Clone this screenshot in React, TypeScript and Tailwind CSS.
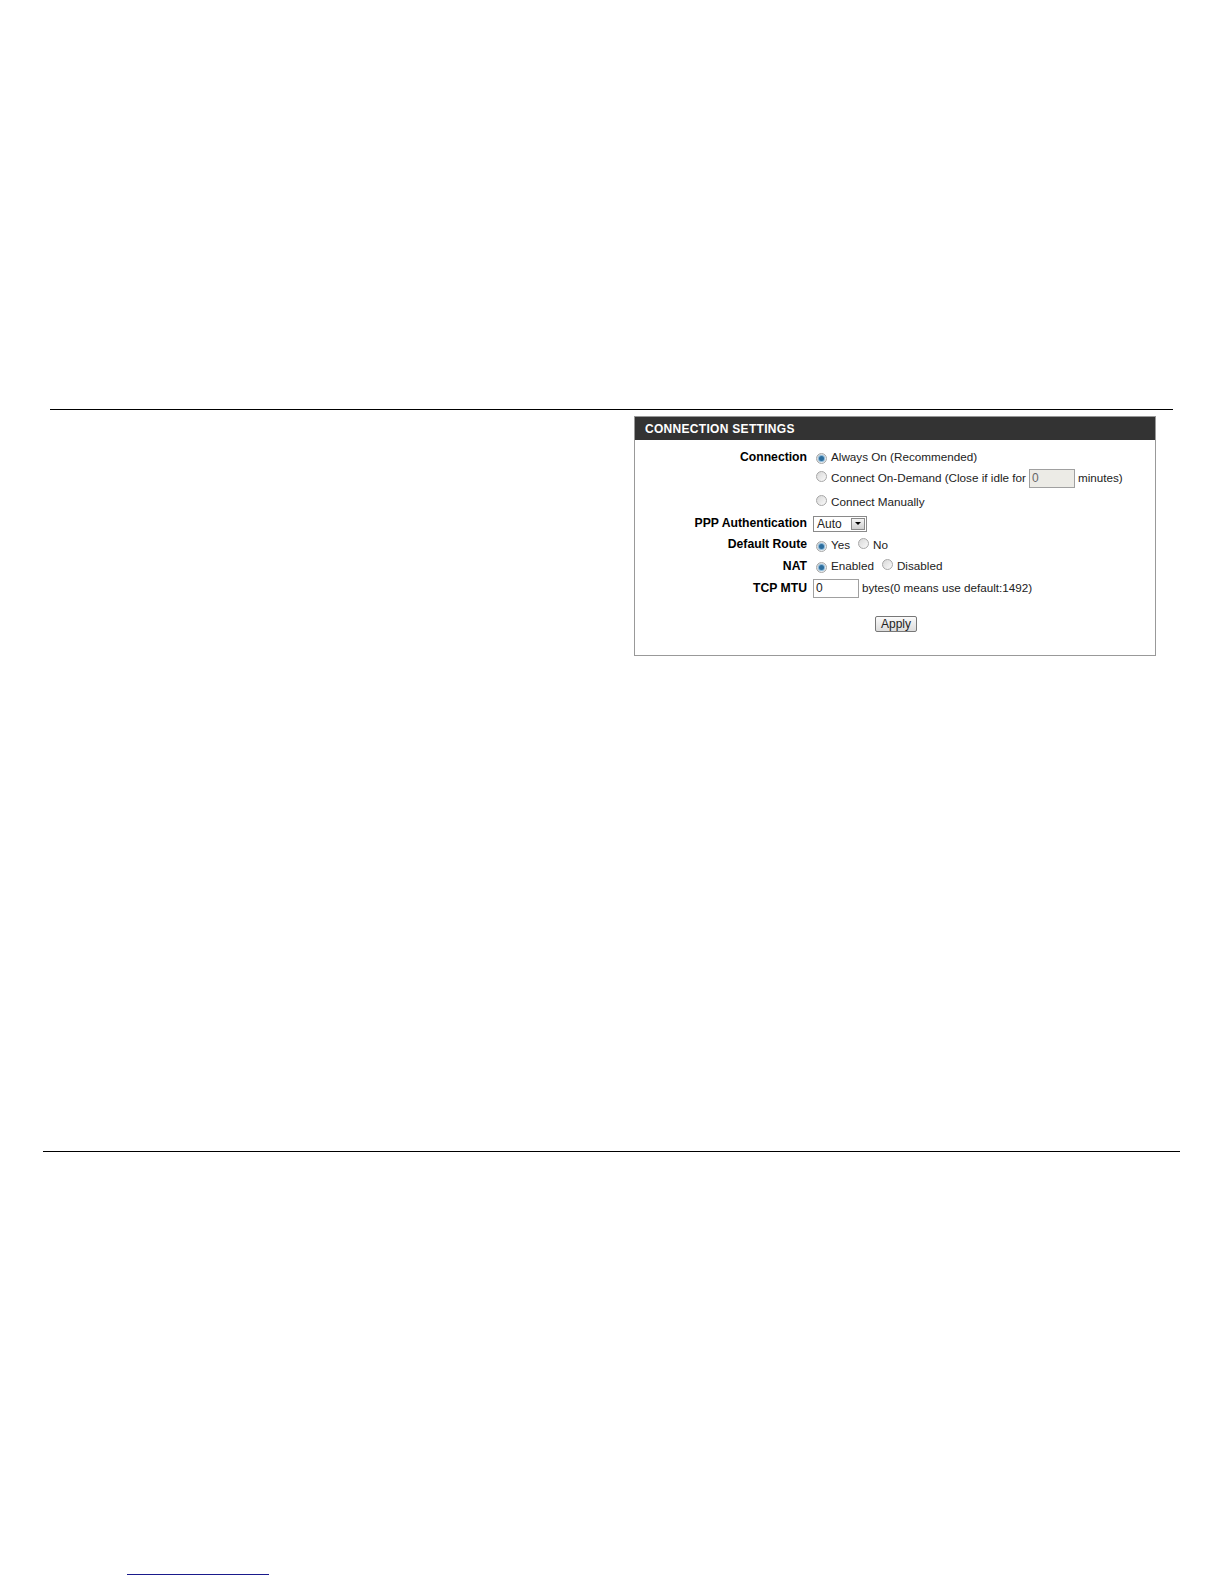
import React from "react";

const font = { fontFamily: '"Liberation Sans", Arial, sans-serif' };

function Radio({ checked }: { checked?: boolean }) {
    return (
        <span className="relative inline-flex h-[11px] w-[11px] shrink-0 items-center justify-center rounded-full border border-[#a7a7a7] bg-gradient-to-br from-[#d8d8d8] to-[#fafafa]">
            {checked && <span className="h-[5px] w-[5px] rounded-full bg-[#2d6e9e] shadow-[0_0_1px_1px_#7fb2d6]" />}
        </span>
    );
}

function Row({ label, h, children }: { label?: string; h: string; children: React.ReactNode }) {
    return (
        <div className={`flex items-center ${h}`}>
            <div className="w-[172px] shrink-0 text-right text-[12.2px] font-bold text-black">{label}</div>
            <div className="flex items-center text-[11.7px] text-[#222]">{children}</div>
        </div>
    );
}

export default function App() {
    return (
        <div className="w-full overflow-hidden bg-white pb-[2px] pt-[409px]" style={font}>
            <div className="ml-[50px] h-px w-[1123px] bg-black" />

            <div className="ml-[634px] mt-[6px] flex h-[240px] w-[522px] flex-col border border-[#999]">
                <div className="flex h-[23px] items-center bg-[#333] pl-[10px] text-[12px] font-bold tracking-[0.3px] text-white">
                    CONNECTION SETTINGS
                </div>
                <div className="pt-[6px]">
                    <Row label="Connection" h="h-[22px]">
                        <span className="ml-[9px] mr-[4px]"><Radio checked /></span>
                        Always On (Recommended)
                    </Row>
                    <Row h="h-[20px]">
                        <span className="ml-[9px] mr-[4px]"><Radio /></span>
                        Connect On-Demand (Close if idle for
                        <span className="ml-[3px] mr-[3px] flex h-[19px] w-[46px] items-center border border-[#a0a0a0] bg-[#ecebe6] pl-[2px] text-[12px] text-[#666]">0</span>
                        minutes)
                    </Row>
                    <Row h="h-[27px]">
                        <span className="ml-[9px] mr-[4px]"><Radio /></span>
                        Connect Manually
                    </Row>
                    <Row label="PPP Authentication" h="h-[17px]">
                        <span className="ml-[6px] flex h-[16px] w-[54px] items-center border border-[#8a8a8a] bg-white">
                            <span className="flex-1 pl-[3px] text-[12px]">Auto</span>
                            <span className="mr-px flex h-[12px] w-[14px] items-center justify-center border border-[#8a8a8a] bg-gradient-to-b from-[#f4f4f4] to-[#d0d0d0]">
                                <span className="h-0 w-0 border-x-[3px] border-t-[3px] border-x-transparent border-t-black" />
                            </span>
                        </span>
                    </Row>
                    <Row label="Default Route" h="h-[25px]">
                        <span className="ml-[9px] mr-[4px]"><Radio checked /></span>
                        Yes
                        <span className="ml-[8px] mr-[4px]"><Radio /></span>
                        No
                    </Row>
                    <Row label="NAT" h="h-[18px]">
                        <span className="ml-[9px] mr-[4px]"><Radio checked /></span>
                        Enabled
                        <span className="ml-[8px] mr-[4px]"><Radio /></span>
                        Disabled
                    </Row>
                    <Row label="TCP MTU" h="h-[26px]">
                        <span className="ml-[6px] mr-[3px] flex h-[19px] w-[46px] items-center border border-[#a0a0a0] bg-white pl-[2px] text-[12px]">0</span>
                        bytes(0 means use default:1492)
                    </Row>
                    <div className="flex pt-[15px]">
                        <div className="ml-[240px] flex h-[16px] w-[42px] items-center justify-center rounded-[2px] border border-[#777] bg-gradient-to-b from-[#fbfbfb] to-[#dcdcdc] text-[12px] text-[#222]">
                            Apply
                        </div>
                    </div>
                </div>
            </div>

            <div className="ml-[43px] mt-[495px] h-px w-[1137px] bg-black" />

            <div className="ml-[127px] mt-[422px] h-px w-[142px] bg-[#1a1a8c]" />
        </div>
    );
}
